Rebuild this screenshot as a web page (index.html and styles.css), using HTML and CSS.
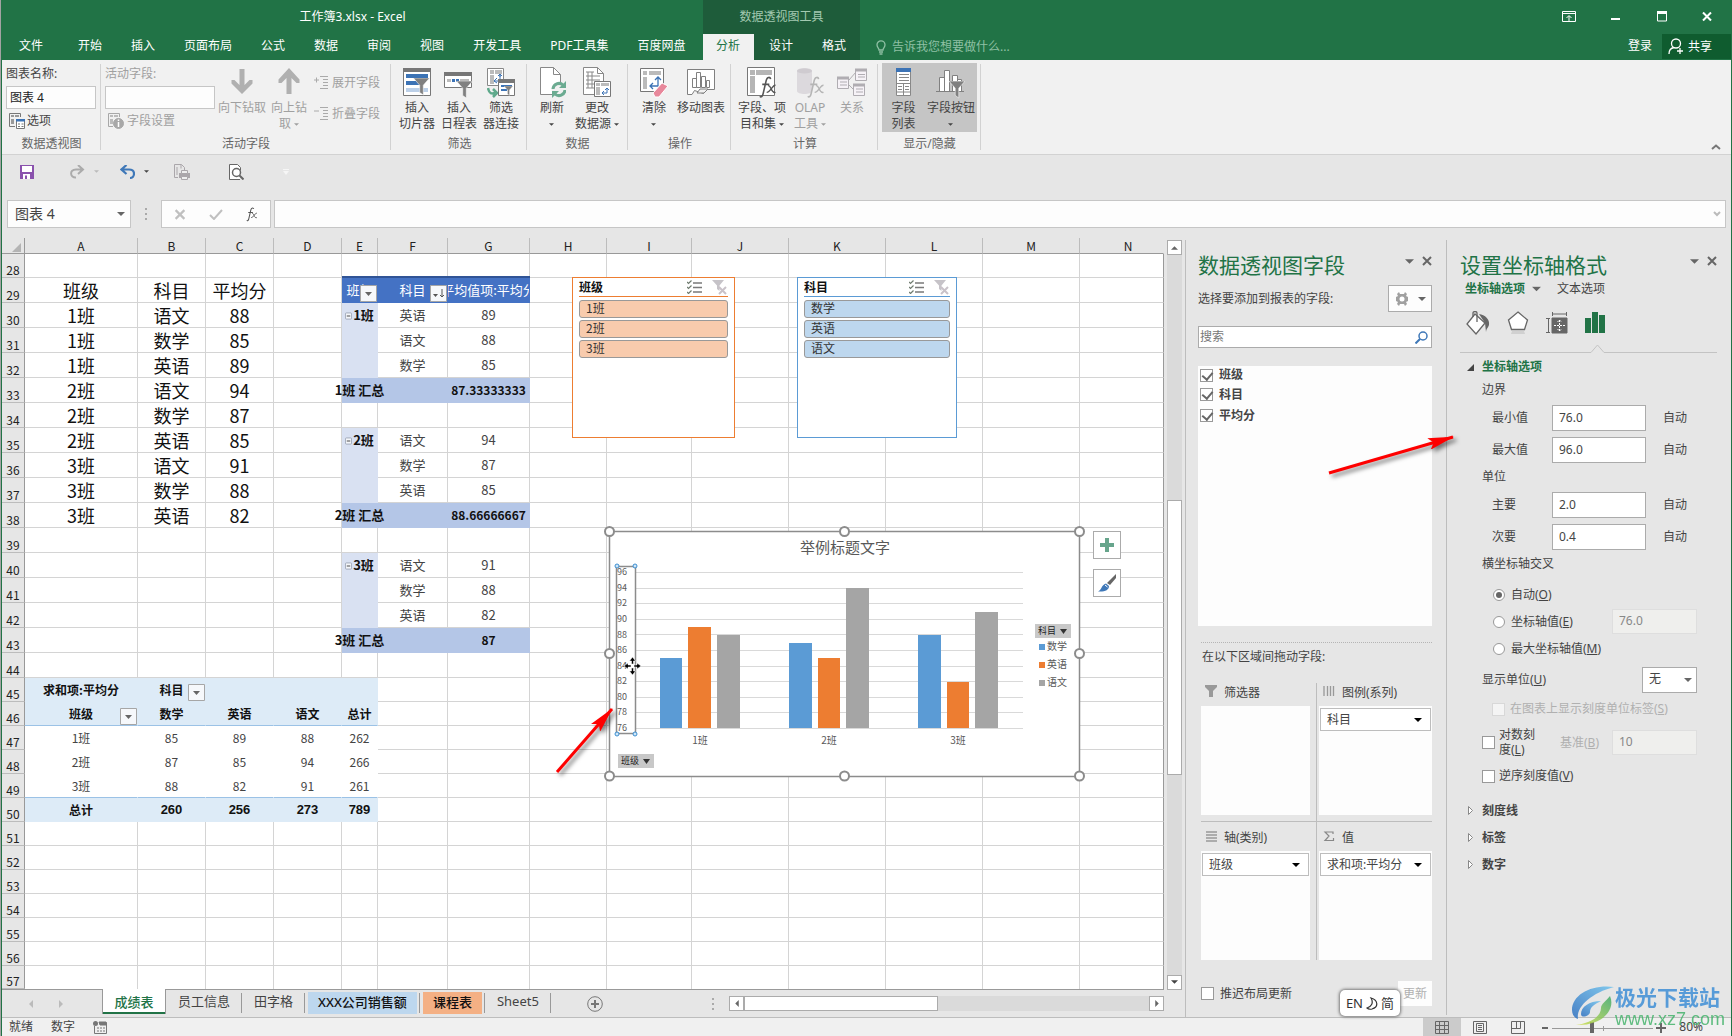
FILE: index.html
```html
<!DOCTYPE html>
<html lang="zh-CN">
<head>
<meta charset="utf-8">
<title>工作簿3.xlsx - Excel</title>
<link rel="stylesheet" href="styles.css">
</head>
<body>
<svg class="defs" aria-hidden="true">
  <defs>
    <symbol id="caret" viewBox="0 0 8 4"><path d="M0 0h8L4 4z" fill="currentColor"/></symbol>
    <symbol id="cross" viewBox="0 0 10 10"><path d="M1 1l8 8M9 1L1 9" stroke="currentColor" stroke-width="2" fill="none"/></symbol>
    <symbol id="drop" viewBox="0 0 17 17"><path d="M.5.5h16v16H.5z" fill="#f6f8fb" stroke="#a6a6a6"/><path d="M5 7h7l-3.500 4z" fill="#666"/></symbol>
    <symbol id="fx" viewBox="0 0 20 26"><path d="M13 3.500C12.500 1 9 .5 8 5L4.500 20C3.800 23.500 2 24.500.8 23M3.500 9.500h8" fill="none" stroke="currentColor" stroke-width="1.800"/><path d="M10 11c4-1 3 9 8.500 7.500M18.500 10.500C15 10 13 18.500 8.500 18.500" fill="none" stroke="currentColor" stroke-width="1.500"/></symbol>
    <symbol id="funnel" viewBox="0 0 18 20"><path d="M0 0h18L11 8v11l-4-3V8z" fill="#808080" stroke="#fff" stroke-width=".6"/></symbol>
    <symbol id="multi" viewBox="0 0 15 14"><path d="M0 2l1.500 1.500L4.500.5M0 7l1.500 1.500 3-3M0 12l1.500 1.500 3-3" fill="none" stroke="#6f7b6f" stroke-width="1.200"/><path d="M6 3h9M6 7.500h9M6 12h9" stroke="#7a7a7a" stroke-width="1.300"/></symbol>
    <symbol id="clear" viewBox="0 0 15 15"><path d="M0 0h12L7.500 5.500V11L5 9V5.500z" fill="#c6c3c8"/><path d="M7 7l7 7M14 7l-7 7" stroke="#c9c2c9" stroke-width="2"/></symbol>
    <symbol id="minus" viewBox="0 0 8 8"><rect x=".5" y=".5" width="7" height="7" rx="1" fill="#f4f6fa" stroke="#9aa3b5"/><path d="M2 4h4" stroke="#333"/></symbol>
    <marker id="tip" viewBox="0 0 26 12" refX="25" refY="6" markerWidth="26" markerHeight="12" markerUnits="userSpaceOnUse" orient="auto"><path d="M26 6L0 0l5 6-5 6z" fill="#fe0000"/></marker>
  </defs>
</svg>
<div class="app">

<header class="top">
  <div class="main-tabs">
    <h1 class="doc-title">工作簿3.xlsx - Excel</h1>
    <nav class="tabs">
      <button class="tab file">文件</button><button class="tab">开始</button><button class="tab">插入</button><button class="tab">页面布局</button><button class="tab">公式</button><button class="tab">数据</button><button class="tab">审阅</button><button class="tab">视图</button><button class="tab">开发工具</button><button class="tab">PDF工具集</button><button class="tab">百度网盘</button>
    </nav>
  </div>
  <div class="context-tabs">
    <div class="context-title">数据透视图工具</div>
    <nav class="tabs"><button class="tab active">分析</button><button class="tab">设计</button><button class="tab">格式</button></nav>
  </div>
  <label class="tell">
    <svg width="10" height="15" viewBox="0 0 10 15" fill="none" stroke="#8fc0a4" stroke-width="1.300"><path d="M3 10C3 8 1 7.500 1 4.800a4 4 0 0 1 8 0C9 7.500 7 8 7 10zM3 12h4M3.500 14h3"/></svg>
    <input type="text" placeholder="告诉我您想要做什么..." aria-label="告诉我您想要做什么">
  </label>
  <div class="top-right">
    <div class="window-buttons">
      <button aria-label="功能区显示选项"><svg width="14" height="11" viewBox="0 0 14 11" fill="none" stroke="#fff"><path d="M.5.5h13v10H.5zM.5 2.500h13M7 10V5M4.500 7L7 4.500 9.500 7"/></svg></button>
      <button aria-label="最小化"><svg width="10" height="11" viewBox="0 0 10 11"><path d="M0 7h9v2H0z" fill="#fff"/></svg></button>
      <button aria-label="最大化"><svg width="10" height="11" viewBox="0 0 10 11"><path d="M.5.5h9v9.500h-9z" fill="none" stroke="#fff"/><path d="M0 0h10v3H0z" fill="#fff"/></svg></button>
      <button aria-label="关闭"><svg width="10" height="11" viewBox="0 0 10 10" color="#fff"><use href="#cross"/></svg></button>
    </div>
    <div class="account">
      <a href="#" class="login">登录</a>
      <button class="share"><svg width="16" height="17" viewBox="0 0 16 17" fill="none" stroke="#fff" stroke-width="1.300"><circle cx="8" cy="5.500" r="4.500"/><path d="M1 16c0-4 2-6 5-6.500M9 13h6M12 10v6"/></svg>共享</button>
    </div>
  </div>
</header>

<section class="ribbon">
  <div class="group g-name">
    <div class="group-body column">
      <label class="field-label" for="chart-name">图表名称:</label>
      <input id="chart-name" class="ribbon-input" type="text" value="图表 4">
      <button class="small-btn"><svg width="16" height="16" viewBox="0 0 16 16" fill="none" stroke="#777"><path d="M6 13.500H.5V.5h11V4"/><path d="M2 2h3v2H2zM6 2h4v2H6zM2 6h3v5H2z" fill="#999" stroke="none"/><path d="M7.500 6.500h8v9h-8z" fill="#fff"/><path d="M7 6h9v2.500H7z" fill="#3c73b5" stroke="none"/><path d="M9 11h2M12.500 11h2M9 13.500h2M12.500 13.500h2"/></svg>选项</button>
    </div>
    <div class="group-label">数据透视图</div>
  </div>
  <div class="group g-field">
    <div class="group-body">
      <div class="column">
        <label class="field-label dim" for="active-field">活动字段:</label>
        <input id="active-field" class="ribbon-input" type="text">
        <button class="small-btn dim"><svg width="16" height="16" viewBox="0 0 16 16" fill="none" stroke="#a8a8a8"><path d="M5 13.500H.5V.5h11V4"/><path d="M2 2h3v2H2zM6 2h4v2H6zM2 6h3v5H2z" fill="#bbb" stroke="none"/><circle cx="10.500" cy="10.500" r="5" fill="#a8a8a8"/><path d="M10.500 9v5M10.500 6.500v1.500" stroke="#fff" stroke-width="1.500"/></svg>字段设置</button>
      </div>
      <button class="big dim w48"><svg width="22" height="32" viewBox="0 0 22 32"><path d="M8.500 2h5v16l5-5h3v3.500L11 27 .5 16.500V13h3l5 5z" fill="#b0b0b0"/></svg>向下钻取</button>
      <button class="big dim w46"><svg width="22" height="32" viewBox="0 0 22 32"><path d="M8.500 27h5V11l5 5h3v-3.500L11 1 .5 12.500V16h3l5-5z" fill="#b0b0b0"/></svg><span>向上钻<br>取 <svg class="c5"><use href="#caret"/></svg></span></button>
      <div class="expand-col">
        <button class="small-btn dim"><svg width="15" height="14" viewBox="0 0 15 14" stroke="#aaa" fill="none"><path d="M0 4h5M2.500 1.500v5M6 .5h8M9 3.500h5M9 6.500h5M9 9.500h5M6 12.500h8"/></svg>展开字段</button>
        <button class="small-btn dim"><svg width="15" height="14" viewBox="0 0 15 14" stroke="#aaa" fill="none"><path d="M0 4h5M6 .5h8M9 3.500h5M9 6.500h5M9 9.500h5M6 12.500h8"/></svg>折叠字段</button>
      </div>
    </div>
    <div class="group-label">活动字段</div>
  </div>
  <div class="group g-filter">
    <div class="group-body">
      <button class="big w42"><svg width="28" height="32" viewBox="0 0 28 32"><path d="M.5 1.500h27v27H.5z" fill="#fff" stroke="#777"/><path d="M0 1h28v4H0z" fill="#777"/><path d="M3 7h22v4H3zM3 14h14v4H3z" fill="#3c73b5"/><path d="M3 21h22v4H3z" fill="#bcd0e8"/><use href="#funnel" x="10" y="11" width="17" height="18"/></svg><span>插入<br>切片器</span></button>
      <button class="big w42"><svg width="30" height="32" viewBox="0 0 30 32"><path d="M.5 5.500h27v15H.5z" fill="#fff" stroke="#777"/><path d="M0 5h28v4H0z" fill="#777"/><path d="M3 12h4v3H3z" fill="#bbb"/><path d="M8 12h3v3H8zM12 12h3v3h-3z" fill="#3c73b5"/><path d="M16 12h9v3h-9z" fill="#bbb"/><use href="#funnel" x="12" y="14" width="17" height="18"/></svg><span>插入<br>日程表</span></button>
      <button class="big w42"><svg width="28" height="32" viewBox="0 0 28 32" fill="none" stroke="#888"><path d="M.5 1.500h16v17H.5z" fill="#fff"/><path d="M3 3h4v4H3zM8 3h7v4H8zM3 8h4v9H3z" fill="#bbb" stroke="none"/><path d="M8 14l-1 0 3-3m-3 3l3 2M13 10V7l-2 2m2-2l2 2M8 14h5v-6" stroke="#3c73b5"/><path d="M1 21c1 6 4 6 7 5M6 22l4 4-4 4" stroke="#5fa98b" stroke-width="2.500"/><path d="M11.500 12.500h16v16h-16z" fill="#fff" stroke="#777"/><path d="M11 12h17v4H11z" fill="#777" stroke="none"/><path d="M14 18h11v2H14zM14 22h6v2h-6z" fill="#3c73b5" stroke="none"/><use href="#funnel" x="17" y="19" width="9" height="10"/></svg><span>筛选<br>器连接</span></button>
    </div>
    <div class="group-label">筛选</div>
  </div>
  <div class="group g-data">
    <div class="group-body">
      <button class="big w42"><svg width="28" height="32" viewBox="0 0 28 32" fill="none"><path d="M2.500.5h13l7 7v20h-20z" fill="#fff" stroke="#888"/><path d="M15.500.5v7h7" stroke="#888"/><circle cx="21" cy="22.500" r="7.500" fill="#f1f1f1"/><path d="M15 22a6 6 0 0 1 10-4M27 23a6 6 0 0 1-10 4" stroke="#6bab91" stroke-width="3"/><path d="M21 21h7v-7zM21 24h-7v7z" fill="#6bab91"/></svg><span>刷新<br><svg class="c5"><use href="#caret"/></svg></span></button>
      <button class="big w48"><svg width="28" height="32" viewBox="0 0 28 32" fill="none" stroke="#888"><path d="M.5.500h14l6 6v21H.5z" fill="#fff"/><path d="M14.500.5v6h6M3 5h8M3 9h14M3 13h14M3 17h8M3 21h8M5 5v16M9 5v16"/><path d="M11.500 14.500h16v15h-16z" fill="#fff" stroke="#777"/><path d="M13 16h4v3h-4zM18 16h8v3h-8zM13 20h4v8h-4z" fill="#bbb" stroke="none"/><path d="M19 26h5v-4M21 24l-2 2 2 2M22 23l2-2 2 2" stroke="#3c73b5"/></svg><span>更改<br>数据源 <svg class="c5"><use href="#caret"/></svg></span></button>
    </div>
    <div class="group-label">数据</div>
  </div>
  <div class="group g-action">
    <div class="group-body">
      <button class="big w42"><svg width="28" height="32" viewBox="0 0 28 32" fill="none"><path d="M.5 1.500h23v23H.5z" fill="#fff" stroke="#777"/><path d="M3 4h4v4H3zM9 4h12v4H9zM3 10h4v12H3z" fill="#bbb"/><path d="M10 19h8v-8M13 16l-3 3 3 3M15 13l3-3 3 3" stroke="#3c73b5" stroke-width="1.300"/><path d="M13 26l9-10 6 3-9 11h-4z" fill="#e8889b" stroke="#fff"/></svg><span>清除<br><svg class="c5"><use href="#caret"/></svg></span></button>
      <button class="big w52"><svg width="28" height="32" viewBox="0 0 28 32" fill="#fff" stroke="#808080"><path d="M5 27.500H.5v-25h27v20l-9 0-2 4-9-3z"/><path d="M10 26l3-4h8l-4 4z" fill="#f1f1f1"/><path d="M5.500 11.500h4v9h-4zM9.500 5.500h4v15h-4zM14.500 9.500h4v11h-4zM19.500 13.500h3v7h-3z"/></svg>移动图表</button>
    </div>
    <div class="group-label">操作</div>
  </div>
  <div class="group g-calc">
    <div class="group-body">
      <button class="big w54"><svg width="30" height="32" viewBox="0 0 30 32"><path d="M.5.5h27v28H.5z" fill="#fff" stroke="#777"/><path d="M3 3h5v5H3zM9 3h16v5H9zM3 9h5v17H3z" fill="#b5b5b5"/><svg x="12" y="9" width="18" height="23" color="#555"><use href="#fx"/></svg></svg><span>字段、项<br>目和集 <svg class="c5"><use href="#caret"/></svg></span></button>
      <button class="big dim w42"><svg width="29" height="32" viewBox="0 0 29 32"><path d="M1 4c0-4 15-4 15 0v20c0 4-15 4-15 0z" fill="#dcd9dd"/><ellipse cx="8.500" cy="4" rx="7.500" ry="2.500" fill="#cfcbd0"/><svg x="11" y="9" width="18" height="23" color="#b5b5b5"><use href="#fx"/></svg></svg><span>OLAP<br>工具 <svg class="c5"><use href="#caret"/></svg></span></button>
      <button class="big dim w42"><svg width="31" height="32" viewBox="0 0 31 32" fill="#f6f2f7" stroke="#b0adb2"><path d="M12 13l7-8M12 18l5 5" fill="none"/><path d="M.5 10.500h11v11H.5zM18.500 2.500h11v11h-11zM16.500 17.500h11v11h-11z"/><path d="M0 11h12M18 3h12M16 18h12" stroke-width="3"/><path d="M3 15h7M3 18h7M21 7.500h7M21 10h7M19 22h7M19 25h7"/></svg>关系</button>
    </div>
    <div class="group-label">计算</div>
  </div>
  <div class="group g-show">
    <div class="group-body">
      <button class="big pressed w43"><svg width="16" height="32" viewBox="0 0 16 32"><path d="M.5 1.500h14v27H.5z" fill="#fff" stroke="#888"/><path d="M0 1h15v4H0z" fill="#3c73b5"/><path d="M3 7.500h10M3 10.500h10M3 13.500h10M0 16.500h15M7.500 17v12M2 19.500h4M9 19.500h4M2 22.500h4M9 22.500h4M0 25h15" stroke="#888"/></svg><span>字段<br>列表</span></button>
      <button class="big pressed w52"><svg width="30" height="32" viewBox="0 0 30 32" fill="#fff" stroke="#808080"><path d="M3.500 10.500h5v14h-5zM8.500 3.500h5v21h-5zM16.500 8.500h5v16h-5zM21.500 12.500h4v12h-4z"/><path d="M0 24.500h28"/><use href="#funnel" x="13" y="14" width="16" height="18"/></svg><span>字段按钮<br><svg class="c5"><use href="#caret"/></svg></span></button>
    </div>
    <div class="group-label">显示/隐藏</div>
  </div>
  <button class="collapse" aria-label="折叠功能区"><svg width="10" height="6" viewBox="0 0 10 6"><path d="M1 5l4-3.500L9 5" fill="none" stroke="#777" stroke-width="2"/></svg></button>
</section>

<section class="qat">
  <button aria-label="保存"><svg width="14" height="14" viewBox="0 0 14 14"><path d="M0 0h14v14H0z" fill="#8a52ad"/><path d="M2 1h10v6H2zM3 9h7v5H3z" fill="#fff"/><path d="M5 10.500h2V14H5z" fill="#8a52ad"/></svg></button>
  <span class="qat-pair"><button aria-label="恢复"><svg width="15" height="14" viewBox="0 0 15 14" fill="none" stroke="#ababab" stroke-width="2"><path d="M8 0l5 4.500L8 9M13 4.500H6C-1 4.500 0 13 6 12.500"/></svg></button><svg class="c5 faint"><use href="#caret"/></svg></span>
  <span class="qat-pair"><button aria-label="撤消"><svg width="15" height="14" viewBox="0 0 15 14" fill="none" stroke="#3f78b8" stroke-width="2.200"><path d="M6.500 0L1.500 4.500l5 4.500M1.500 4.500H9c7 0 6 8.500 1 8.500"/></svg></button><svg class="c5"><use href="#caret"/></svg></span>
  <button aria-label="打印"><svg width="16" height="16" viewBox="0 0 16 16" fill="none" stroke="#aaa6aa"><path d="M4 13.500H.5V.5h7l3 3V6M7 .5v4M3 3v8"/><path d="M5 9h11v5H5z" fill="#aaa6aa" stroke="none"/><path d="M7.500 6.500h6v3h-6zM7.500 12.500h6v3h-6z" fill="#eee"/></svg></button>
  <button class="preview" aria-label="打印预览"><svg width="15" height="16" viewBox="0 0 15 16" fill="none" stroke="#666"><path d="M11 15.500H.5V.5h8l3 3v3" fill="#fff"/><circle cx="7.500" cy="8.500" r="4" stroke-width="1.500"/><path d="M10.500 11.500l4 4" stroke-width="2"/></svg></button>
  <button class="more" aria-label="自定义快速访问工具栏"><svg width="6" height="6" viewBox="0 0 6 6"><path d="M0 0h6v1H0zM0 2h6L3 6z" fill="#f6f6f6"/></svg></button>
</section>

<section class="formula-row">
  <div class="name-box"><input type="text" value="图表 4" aria-label="名称框"><svg class="c7"><use href="#caret"/></svg></div>
  <svg class="grip" width="2" height="12" viewBox="0 0 2 12"><path d="M0 0h2v2H0zM0 5h2v2H0zM0 10h2v2H0z" fill="#aaa"/></svg>
  <div class="fx-box">
    <button aria-label="取消"><svg width="12" height="11" viewBox="0 0 10 10" color="#c0c0c0"><use href="#cross"/></svg></button>
    <button aria-label="输入"><svg width="14" height="11" viewBox="0 0 14 11"><path d="M1 6l4 4L13 1" fill="none" stroke="#c0c0c0" stroke-width="2"/></svg></button>
    <button aria-label="插入函数"><svg width="12" height="15" viewBox="0 0 20 26" color="#555"><use href="#fx"/></svg></button>
  </div>
  <div class="formula"><input type="text" aria-label="编辑栏"><svg width="8" height="6" viewBox="0 0 8 6"><path d="M1 1l3 3 3-3" fill="none" stroke="#bbb" stroke-width="2"/></svg></div>
</section>

<main class="workspace">
  <section class="workbook">
    <div class="sheet-area">
      <div class="sheet">
        <table class="cells">
          <colgroup><col class="k-rh"><col class="k-a"><col class="k-b"><col class="k-b"><col class="k-b"><col class="k-e"><col class="k-f"><col class="k-g"><col class="k-h"><col class="k-i"><col class="k-j"><col class="k-j"><col class="k-j"><col class="k-j"><col></colgroup>
          <thead><tr><th class="corner"><svg width="9" height="9" viewBox="0 0 9 9"><path d="M9 0v9H0z" fill="#b4b4b4"/></svg><th>A<th>B<th>C<th>D<th>E<th>F<th>G<th>H<th>I<th>J<th>K<th>L<th>M<th class="n-head">N</tr></thead>
          <tbody>
          <tr class="r24"><th>28<td><td><td><td><td><td><td><td><td><td><td><td><td><td></tr>
          <tr class="list"><th>29<td>班级<td>科目<td>平均分<td><td class="ph">班级<button class="dd" aria-label="筛选班级"><svg width="17" height="17"><use href="#drop"/></svg></button><td class="ph">科目<button class="dd" aria-label="筛选科目"><svg width="17" height="17" viewBox="0 0 17 17"><path d="M.5.5h16v16H.5z" fill="#f6f8fb" stroke="#a6a6a6"/><path d="M3 9h5l-2.500 3z" fill="#555"/><path d="M12 4v8M10 10l2 2 2-2" stroke="#555" fill="none"/></svg></button><td class="ph clip"><span>平均值项:平均分</span><td><td><td><td><td><td><td></tr>
          <tr class="list"><th>30<td>1班<td>语文<td>88<td><td class="pe"><svg width="7" height="8"><use href="#minus"/></svg> 1班<td class="p">英语<td class="p">89<td><td><td><td><td><td><td></tr>
          <tr class="list"><th>31<td>1班<td>数学<td>85<td><td class="pe"><td class="p">语文<td class="p">88<td><td><td><td><td><td><td></tr>
          <tr class="list"><th>32<td>1班<td>英语<td>89<td><td class="pe"><td class="p">数学<td class="p">85<td><td><td><td><td><td><td></tr>
          <tr class="list"><th>33<td>2班<td>语文<td>94<td><td class="ps"><span class="spill">1班 汇总</span><td class="ps"><td class="ps avg">87.33333333<td><td><td><td><td><td><td></tr>
          <tr class="list"><th>34<td>2班<td>数学<td>87<td><td><td><td><td><td><td><td><td><td><td></tr>
          <tr class="list"><th>35<td>2班<td>英语<td>85<td><td class="pe"><svg width="7" height="8"><use href="#minus"/></svg> 2班<td class="p">语文<td class="p">94<td><td><td><td><td><td><td></tr>
          <tr class="list"><th>36<td>3班<td>语文<td>91<td><td class="pe"><td class="p">数学<td class="p">87<td><td><td><td><td><td><td></tr>
          <tr class="list"><th>37<td>3班<td>数学<td>88<td><td class="pe"><td class="p">英语<td class="p">85<td><td><td><td><td><td><td></tr>
          <tr class="list"><th>38<td>3班<td>英语<td>82<td><td class="ps"><span class="spill">2班 汇总</span><td class="ps"><td class="ps avg">88.66666667<td><td><td><td><td><td><td></tr>
          <tr><th>39<td><td><td><td><td><td><td><td><td><td><td><td><td><td></tr>
          <tr><th>40<td><td><td><td><td class="pe"><svg width="7" height="8"><use href="#minus"/></svg> 3班<td class="p">语文<td class="p">91<td><td><td><td><td><td><td></tr>
          <tr><th>41<td><td><td><td><td class="pe"><td class="p">数学<td class="p">88<td><td><td><td><td><td><td></tr>
          <tr><th>42<td><td><td><td><td class="pe"><td class="p">英语<td class="p">82<td><td><td><td><td><td><td></tr>
          <tr><th>43<td><td><td><td><td class="ps"><span class="spill">3班 汇总</span><td class="ps"><td class="ps avg">87<td><td><td><td><td><td><td></tr>
          <tr><th>44<td><td><td><td><td><td><td><td><td><td><td><td><td><td></tr>
          <tr class="r24"><th>45<td class="qh">求和项:平均分<td class="qh">科目<button class="dd" aria-label="筛选科目"><svg width="17" height="17"><use href="#drop"/></svg></button><td class="qh"><td class="qh"><td class="qh"><td><td><td><td><td><td><td><td><td></tr>
          <tr class="r24"><th>46<td class="qh ql">班级<button class="dd" aria-label="筛选班级"><svg width="17" height="17"><use href="#drop"/></svg></button><td class="qh ql">数学<td class="qh ql">英语<td class="qh ql">语文<td class="qh ql">总计<td><td><td><td><td><td><td><td><td></tr>
          <tr class="r24"><th>47<td class="q">1班<td class="q">85<td class="q">89<td class="q">88<td class="q">262<td><td><td><td><td><td><td><td><td></tr>
          <tr class="r24"><th>48<td class="q">2班<td class="q">87<td class="q">85<td class="q">94<td class="q">266<td><td><td><td><td><td><td><td><td></tr>
          <tr class="r24"><th>49<td class="q ql">3班<td class="q ql">88<td class="q ql">82<td class="q ql">91<td class="q ql">261<td><td><td><td><td><td><td><td><td></tr>
          <tr class="r24"><th>50<td class="qh qt">总计<td class="qh qt">260<td class="qh qt">256<td class="qh qt">273<td class="qh qt">789<td><td><td><td><td><td><td><td><td></tr>
          <tr class="r24"><th>51<td><td><td><td><td><td><td><td><td><td><td><td><td><td></tr>
          <tr class="r24"><th>52<td><td><td><td><td><td><td><td><td><td><td><td><td><td></tr>
          <tr class="r24"><th>53<td><td><td><td><td><td><td><td><td><td><td><td><td><td></tr>
          <tr class="r24"><th>54<td><td><td><td><td><td><td><td><td><td><td><td><td><td></tr>
          <tr class="r24"><th>55<td><td><td><td><td><td><td><td><td><td><td><td><td><td></tr>
          <tr class="r24"><th>56<td><td><td><td><td><td><td><td><td><td><td><td><td><td></tr>
          <tr class="last"><th>57<td><td><td><td><td><td><td><td><td><td><td><td><td><td></tr>
          </tbody>
        </table>

        <div class="slicer orange">
          <div class="slicer-head"><span>班级</span><svg width="15" height="14"><use href="#multi"/></svg><svg width="15" height="15"><use href="#clear"/></svg></div>
          <button>1班</button><button>2班</button><button>3班</button>
        </div>
        <div class="slicer blue">
          <div class="slicer-head"><span>科目</span><svg width="15" height="14"><use href="#multi"/></svg><svg width="15" height="15"><use href="#clear"/></svg></div>
          <button>数学</button><button>英语</button><button>语文</button>
        </div>

        <svg class="chart" width="482" height="258" viewBox="603 525 482 258">
          <rect x="609.500" y="531.500" width="470" height="245" fill="#fff" stroke="#8c8c8c" stroke-width="1.500"/>
          <text x="845" y="553" class="t-title">举例标题文字</text>
          <path class="gridline" d="M635 572.500h388M635 588.500h388M635 603.500h388M635 619.500h388M635 634.500h388M635 650.500h388M635 666.500h388M635 681.500h388M635 697.500h388M635 712.500h388M635 728.500h388"/>
          <g fill="#5b9bd5"><rect x="660" y="658" width="22" height="70"/><rect x="789" y="643" width="23" height="85"/><rect x="918" y="635" width="23" height="93"/></g>
          <g fill="#ed7d31"><rect x="688" y="627" width="23" height="101"/><rect x="818" y="658" width="22" height="70"/><rect x="947" y="682" width="22" height="46"/></g>
          <g fill="#a5a5a5"><rect x="717" y="635" width="23" height="93"/><rect x="846" y="588" width="23" height="140"/><rect x="975" y="612" width="23" height="116"/></g>
          <g class="t-axis"><text x="617" y="575">96</text><text x="617" y="591">94</text><text x="617" y="606">92</text><text x="617" y="622">90</text><text x="617" y="638">88</text><text x="617" y="653">86</text><text x="617" y="669">84</text><text x="617" y="684">82</text><text x="617" y="700">80</text><text x="617" y="715">78</text><text x="617" y="731">76</text></g>
          <g class="t-cat"><text x="700" y="744">1班</text><text x="829" y="744">2班</text><text x="958" y="744">3班</text></g>
          <g class="t-leg"><text x="1047" y="650">数学</text><text x="1047" y="668">英语</text><text x="1047" y="686">语文</text></g>
          <path d="M1039 644h6v6h-6z" fill="#5b9bd5"/><path d="M1039 662h6v6h-6z" fill="#ed7d31"/><path d="M1039 680h6v6h-6z" fill="#a5a5a5"/>
          <rect x="1035" y="624" width="36" height="14" fill="#c8c8c8"/><text x="1038" y="634" class="t-btn">科目</text><path d="M1060 629h7l-3.500 5z" fill="#333"/>
          <rect x="618" y="754" width="36" height="14" fill="#c8c8c8"/><text x="621" y="764" class="t-btn">班级</text><path d="M643 759h7l-3.500 5z" fill="#333"/>
          <rect x="616.500" y="566.500" width="19" height="167" fill="none" stroke="#8c8c8c" stroke-width="1.500"/>
          <g fill="#cfe6f8" stroke="#3c8fd0"><circle cx="617" cy="566" r="2"/><circle cx="635" cy="566" r="2"/><circle cx="617" cy="734" r="2"/><circle cx="635" cy="734" r="2"/></g>
          <g fill="#fff" stroke="#8c8c8c" stroke-width="2"><circle cx="609.500" cy="531.500" r="4.500"/><circle cx="844.500" cy="531.500" r="4.500"/><circle cx="1079.500" cy="531.500" r="4.500"/><circle cx="609.500" cy="653.500" r="4.500"/><circle cx="1079.500" cy="653.500" r="4.500"/><circle cx="609.500" cy="776" r="4.500"/><circle cx="844.500" cy="776" r="4.500"/><circle cx="1079.500" cy="776" r="4.500"/></g>
          <path d="M632.500 657l3 4h-2v3h-2v-3h-2zM632.500 675l3-4h-2v-3h-2v3h-2zM624 666l4-3v2h3v2h-3v2zM641 666l-4-3v2h-3v2h3v2z" fill="#000" stroke="#fff" stroke-width=".5"/>
        </svg>
        <div class="chart-tools">
          <button aria-label="图表元素"><svg width="14" height="14" viewBox="0 0 14 14"><path d="M5 0h4v5h5v4H9v5H5V9H0V5h5z" fill="#67a58c"/></svg></button>
          <button aria-label="图表样式"><svg width="18" height="18" viewBox="0 0 18 18"><path d="M18 0v4l-6 7-3-2z" fill="#666"/><path d="M8 9.500l3 2.500c0 4-4 6-11 5.500C4 16 3 11 8 9.500z" fill="#3f78b8"/><path d="M7 11l2.500 2" stroke="#fff"/></svg></button>
        </div>
        <svg class="arrow a1" width="68" height="76" viewBox="0 0 68 76"><path d="M5 68L60 5" stroke="#fe0000" stroke-width="3" marker-end="url(#tip)"/></svg>
      </div>
      <div class="vscroll">
        <button aria-label="向上滚动"><svg width="7" height="4" viewBox="0 0 8 4"><path d="M4 0l4 4H0z" fill="#666"/></svg></button>
        <div class="v-before"></div><div class="v-thumb"></div><div class="v-after"></div>
        <button aria-label="向下滚动"><svg width="7" height="4"><use href="#caret"/></svg></button>
      </div>
    </div>
    <div class="sheet-bar">
      <div class="sheet-nav"><svg width="4" height="8" viewBox="0 0 4 8"><path d="M4 0v8L0 4z" fill="#bbb"/></svg><svg width="4" height="8" viewBox="0 0 4 8"><path d="M0 0v8l4-4z" fill="#bbb"/></svg></div>
      <button class="st current">成绩表</button>
      <button class="st">员工信息</button>
      <button class="st">田字格</button>
      <button class="st colored"><span class="c-blue">XXX公司销售额</span></button>
      <button class="st colored"><span class="c-orange">课程表</span></button>
      <button class="st">Sheet5</button>
      <button class="add" aria-label="新工作表"><svg width="16" height="16" viewBox="0 0 16 16" fill="none" stroke="#777"><circle cx="8" cy="8" r="7.300"/><path d="M4 8h8M8 4v8" stroke-width="2"/></svg></button>
      <svg class="grip bar-grip" width="2" height="12" viewBox="0 0 2 12"><path d="M0 0h2v2H0zM0 5h2v2H0zM0 10h2v2H0z" fill="#aaa"/></svg>
      <div class="hscroll">
        <button aria-label="向左滚动"><svg width="4" height="7" viewBox="0 0 4 8"><path d="M4 0v8L0 4z" fill="#666"/></svg></button>
        <div class="h-thumb"></div><div class="h-after"></div>
        <button aria-label="向右滚动"><svg width="4" height="7" viewBox="0 0 4 8"><path d="M0 0v8l4-4z" fill="#666"/></svg></button>
      </div>
    </div>
  </section>

  <aside class="pane fields">
    <div class="pane-head"><h2>数据透视图字段</h2><button aria-label="选项"><svg width="9" height="5"><use href="#caret"/></svg></button><button aria-label="关闭"><svg width="10" height="10"><use href="#cross"/></svg></button></div>
    <div class="choose"><span>选择要添加到报表的字段:</span><button class="gear" aria-label="工具"><svg width="14" height="14" viewBox="0 0 14 14"><path d="M4 0l1 2h4l1-2 2 2-1 2 2 1v4l-2 1 1 2-2 2-1-2H5l-1 2-2-2 1-2-2-1V5l2-1-1-2z" fill="#a0a0a0"/><circle cx="7" cy="7" r="2.500" fill="#fff"/></svg><svg class="c7"><use href="#caret"/></svg></button></div>
    <div class="search"><input type="text" placeholder="搜索" aria-label="搜索"><svg width="13" height="13" viewBox="0 0 13 13" fill="none" stroke="#3f78b8"><circle cx="8" cy="5" r="4" stroke-width="1.500"/><path d="M5 8l-4.500 4.500" stroke-width="2"/></svg></div>
    <div class="field-list">
      <label><input type="checkbox" checked>班级</label>
      <label><input type="checkbox" checked>科目</label>
      <label><input type="checkbox" checked>平均分</label>
    </div>
    <div class="drag-hint">在以下区域间拖动字段:</div>
    <div class="zones">
      <div class="zone left"><h3><svg width="12" height="12" viewBox="0 0 12 12"><path d="M0 0h12v2L8 6v6H4V6L0 2z" fill="#999"/></svg>筛选器</h3><div class="well"></div></div>
      <div class="zone"><h3><svg width="12" height="12" viewBox="0 0 12 12"><path d="M1 1v10M4.500 1v10M7.500 1v10M10.500 1v10" stroke="#999" stroke-width="1.300"/></svg>图例(系列)</h3><div class="well"><button>科目<svg class="c7"><use href="#caret"/></svg></button></div></div>
      <div class="zone left low"><h3><svg width="12" height="12" viewBox="0 0 12 12"><path d="M1 2h11M1 5h11M1 8h11M1 11h11" stroke="#999" stroke-width="1.300"/></svg>轴(类别)</h3><div class="well"><button>班级<svg class="c7"><use href="#caret"/></svg></button></div></div>
      <div class="zone low"><h3><svg width="12" height="12" viewBox="0 0 12 12"><path d="M10 4V2H2l4 4-4 4.500h8.500V8" fill="none" stroke="#888" stroke-width="1.200"/></svg>值</h3><div class="well"><button>求和项:平均分<svg class="c7"><use href="#caret"/></svg></button></div></div>
    </div>
    <div class="defer"><label><input type="checkbox">推迟布局更新</label><button disabled>更新</button></div>
  </aside>

  <aside class="pane format">
    <div class="pane-head"><h2>设置坐标轴格式</h2><button aria-label="选项"><svg width="9" height="5"><use href="#caret"/></svg></button><button aria-label="关闭"><svg width="10" height="10"><use href="#cross"/></svg></button></div>
    <div class="opt-tabs"><button class="on">坐标轴选项</button><svg width="9" height="6" color="#666" viewBox="0 0 8 5"><use href="#caret" width="8" height="5"/></svg><button>文本选项</button></div>
    <div class="opt-icons">
      <button aria-label="填充"><svg width="24" height="24" viewBox="0 0 24 24"><path d="M9 3l10 9-9 11-9-10z" fill="#fff" stroke="#666" stroke-width="1.300"/><path d="M7 6V2c0-2 4-2 4 0v9" fill="none" stroke="#666" stroke-width="1.300"/><path d="M13 3c6 1 11 5 10 11-1 3-3 4-3 7l-1-9z" fill="#666"/></svg></button>
      <button aria-label="效果"><svg width="22" height="24" viewBox="0 0 22 24"><path d="M11 1l9.500 8-3 9.500h-13L1.500 9z" fill="#fff" stroke="#666" stroke-width="1.300"/><path d="M5 20h12l1 3H4z" fill="#d0d0d0"/></svg></button>
      <button aria-label="大小与属性"><svg width="22" height="24" viewBox="0 0 22 24" fill="none" stroke="#666"><path d="M6 7h15v15H6z" fill="#666"/><path d="M6.500 1v4M20.500 1v4M6.500 3h14M0 7.500h4M0 21.500h4M2.500 7v15"/><path d="M13.500 9v11M8 14.500h11M11.500 11l2-2 2 2M11.500 18l2 2 2-2" stroke="#fff" stroke-dasharray="2 1"/></svg></button>
      <button aria-label="坐标轴选项"><svg width="21" height="24" viewBox="0 0 21 24" fill="#217346"><path d="M0 7h6v15H0zM7 1h6v21H7zM14 4h6v18h-6z"/></svg></button>
    </div>
    <div class="notch"><span></span><svg width="13" height="9" viewBox="0 0 13 9"><path d="M0 8.500l6.500-7.500L13 8.500" fill="#e6e6e6" stroke="#c3c3c3"/></svg><span></span></div>
    <h3 class="sec open"><svg width="7" height="7" viewBox="0 0 7 7"><path d="M7 0v7H0z" fill="#444"/></svg>坐标轴选项</h3>
    <h4>边界</h4>
    <div class="num"><label for="v-min">最小值</label><input id="v-min" type="text" value="76.0"><span>自动</span></div>
    <div class="num next"><label for="v-max">最大值</label><input id="v-max" type="text" value="96.0"><span>自动</span></div>
    <h4 class="tight">单位</h4>
    <div class="num"><label for="v-major">主要</label><input id="v-major" type="text" value="2.0"><span>自动</span></div>
    <div class="num next"><label for="v-minor">次要</label><input id="v-minor" type="text" value="0.4"><span>自动</span></div>
    <h4 class="tight">横坐标轴交叉</h4>
    <div class="radios">
      <label><input type="radio" name="cross" checked>自动(<u>O</u>)</label>
      <div class="with-value"><label><input type="radio" name="cross">坐标轴值(<u>E</u>)</label><input type="text" class="off" value="76.0" aria-label="坐标轴值" disabled></div>
      <label><input type="radio" name="cross">最大坐标轴值(<u>M</u>)</label>
    </div>
    <div class="unit-row"><label for="unit">显示单位(<u>U</u>)</label><div class="select"><select id="unit"><option>无</option></select><svg class="c7"><use href="#caret"/></svg></div></div>
    <label class="check sub"><input type="checkbox" disabled><span>在图表上显示刻度单位标签(<u>S</u>)</span></label>
    <div class="log-row"><label class="check"><input type="checkbox"><span>对数刻<br>度(<u>L</u>)</span></label><label class="muted" for="base">基准(<u>B</u>)</label><input id="base" type="text" class="off" value="10" disabled></div>
    <label class="check reverse"><input type="checkbox"><span>逆序刻度值(<u>V</u>)</span></label>
    <div class="secs">
      <h3 class="sec"><svg width="5" height="9" viewBox="0 0 5 9"><path d="M.5.5l4 4-4 4z" fill="#fff" stroke="#888"/></svg>刻度线</h3>
      <h3 class="sec"><svg width="5" height="9" viewBox="0 0 5 9"><path d="M.5.5l4 4-4 4z" fill="#fff" stroke="#888"/></svg>标签</h3>
      <h3 class="sec"><svg width="5" height="9" viewBox="0 0 5 9"><path d="M.5.5l4 4-4 4z" fill="#fff" stroke="#888"/></svg>数字</h3>
    </div>
  </aside>
</main>

<footer class="status">
  <span>就绪</span><span>数字</span>
  <svg width="14" height="13" viewBox="0 0 14 13" fill="none" stroke="#777"><path d="M1.500 5v7.500h12v-11H6"/><path d="M6 1h7v3H7z" fill="#777"/><circle cx="2.500" cy="2.500" r="2.500" fill="#777" stroke="none"/><path d="M4 7h2M7 7h2M10 7h2M4 10h2M7 10h2M10 10h2"/></svg>
  <div class="status-right">
    <button class="view sel" aria-label="普通"><svg width="14" height="13" viewBox="0 0 14 13" fill="none" stroke="#666"><path d="M.5.5h13v12H.5zM.5 4.500h13M.5 8.500h13M4.500.5v12M9.500.5v12"/></svg></button>
    <button class="view" aria-label="页面布局"><svg width="14" height="13" viewBox="0 0 14 13" fill="none" stroke="#666"><path d="M.5.5h13v12H.5zM3.500 2.500h7v8h-7zM5 4.500h4M5 6.500h4M5 8.500h4"/></svg></button>
    <button class="view" aria-label="分页预览"><svg width="14" height="13" viewBox="0 0 14 13" fill="none" stroke="#666"><path d="M.5.5h13v12H.5zM.5 7.500h9v-7M5.500.5v7"/></svg></button>
    <svg class="zoom" width="124" height="13" viewBox="0 0 124 13"><path d="M0 6h6v2H0zM114 6h10v2h-10zM118 2h2v10h-2z" fill="#666"/><path d="M10 7.500h101M61.500 5v5" stroke="#999"/><path d="M48 1h4v11h-4z" fill="#666"/></svg>
    <span>80%</span>
  </div>
</footer>

<svg class="arrow a2" width="140" height="56" viewBox="0 0 140 56"><path d="M8 44L132 8" stroke="#fe0000" stroke-width="3" marker-end="url(#tip)"/></svg>
<div class="ime">EN <svg width="12" height="13" viewBox="0 0 12 13"><path d="M5 1c7 2 8 9 1 11-2 .5-4 0-5-1C5 10 8 6 5 1z" fill="none" stroke="#333" stroke-width="1.200"/></svg> 简</div>
<div class="brand">
  <svg width="44" height="44" viewBox="0 0 44 44"><defs><linearGradient id="bl" x1="0" y1="1" x2="1" y2="0"><stop offset="0" stop-color="#2d6fc0"/><stop offset="1" stop-color="#6fc3ee"/></linearGradient><linearGradient id="gr" x1="0" y1="1" x2="1" y2="0"><stop offset="0" stop-color="#d5e04c"/><stop offset="1" stop-color="#3faa6b"/></linearGradient></defs><path d="M43 2C22-1 1 9 1 25c0 5 3 8 6 9C5 22 20 8 43 2z" fill="url(#bl)"/><path d="M10 29c0-7 8-13 20-13-6 3-11 6-11 11 0 4-9 7-9 2z" fill="url(#bl)"/><path d="M39 11c6 14-8 30-34 29 14-2 25-8 25-17 0-4 5-7 9-12z" fill="url(#gr)"/></svg>
  <div><strong>极光下载站</strong><em>www.xz7.com</em></div>
</div>
</div>
</body>
</html>
```
FILE: styles.css
```css
* { box-sizing: border-box; }
html { background: #e6e6e6; }
body {
  margin: 0;
  border-left: 1px solid #a3a3a3;
  font: 12px/16px "Noto Sans", "Noto Sans CJK SC", sans-serif;
  color: #444;
}
button, input, select { font: inherit; color: inherit; margin: 0; padding: 0; border: 0; background: none; border-radius: 0; }
button { white-space: nowrap; }
h1, h2, h3, h4 { margin: 0; font-size: 12px; font-weight: 400; }
svg { flex: none; }
.defs { position: absolute; width: 0; height: 0; }
.c5 { width: 5px; height: 3px; vertical-align: middle; }
.c7 { width: 8px; height: 4px; }
.faint { color: #bbb; }
.dim { color: #a0a0a0; }

.app {
  position: relative;
  display: flex;
  flex-direction: column;
  min-height: 100vh;
  border: solid #217346;
  border-width: 0 1px;
  background: #e6e6e6;
}

/* title bar and tabs */
.top { display: flex; height: 60px; background: #217346; color: #fff; }
.main-tabs { display: flex; flex-direction: column; width: 701px; }
.doc-title { line-height: 34px; text-align: center; }
.tabs { display: flex; }
.tab { height: 26px; padding: 0 14px 2px 15px; }
.tab.file { padding: 0 20px 2px 17px; }
.context-tabs { width: 157px; background: #1e5c3a; }
.context-title { height: 34px; line-height: 34px; text-align: center; color: #a3c9b1; }
.context-tabs .tab.active { background: #f1f1f1; color: #217346; padding: 0 14px 2px 13px; }
.tell { display: flex; align-items: flex-end; gap: 6px; padding: 0 0 5px 16px; }
.tell input { width: 150px; height: 18px; }
.tell input::placeholder { color: #8fc0a4; opacity: 1; }
.top-right { margin-left: auto; width: 180px; display: flex; flex-direction: column; }
.window-buttons { height: 34px; padding: 0 19px 2px 11px; display: flex; justify-content: space-between; align-items: center; }
.window-buttons svg { display: block; }
.account { display: flex; justify-content: flex-end; gap: 10px; }
.login { color: #fff; text-decoration: none; line-height: 23px; }
.share { display: flex; align-items: center; gap: 4px; width: 69px; height: 25px; padding-left: 6px; background: #0f5c2f; }

/* ribbon */
.ribbon { display: flex; height: 95px; background: #f1f1f1; border-bottom: 1px solid #d2d2d2; position: relative; }
.group { position: relative; display: flex; flex-direction: column; padding: 0 4px; }
.group::after { content: ""; position: absolute; right: 0; top: 4px; bottom: 4px; width: 1px; background: #d2d2d2; }
.group-body { display: flex; flex: 1; }
.group-label { text-align: center; color: #666; height: 16px; margin-bottom: 2px; }
.g-name { width: 99px; }
.g-field { width: 290px; }
.g-filter { width: 136px; padding-left: 5px; }
.g-data { width: 101px; }
.g-action { width: 103px; padding-left: 5px; }
.g-calc { width: 147px; padding-right: 3px; }
.g-show { width: 103px; }
.column { display: flex; flex-direction: column; }
.g-field .column { width: 110px; margin-right: 3px; }
.field-label { margin-top: 6px; line-height: 16px; }
.ribbon-input { width: 90px; height: 23px; margin: 4px 0 3px; padding: 0 3px 1px; border: 1px solid #c6c6c6; background: #fdfdfd; color: #222; }
.g-field .ribbon-input { width: 110px; }
.small-btn { display: flex; align-items: center; gap: 3px; height: 18px; padding-left: 3px; }
.g-name .small-btn { gap: 2px; }
.big { display: flex; flex-direction: column; align-items: center; padding-top: 7px; height: 73px; line-height: 16px; }
.big > svg { display: block; margin-bottom: 1px; }
.w42 { width: 42px; } .w43 { width: 43px; } .w46 { width: 46px; } .w48 { width: 48px; } .w52 { width: 52px; } .w54 { width: 54px; }
.pressed { background: #c5c5c5; height: 69px; margin-top: 3px; padding-top: 4px; }
.expand-col { display: flex; flex-direction: column; gap: 13px; padding: 14px 0 0 2px; }
.expand-col .small-btn { padding-left: 0; }
.collapse { margin-left: auto; align-self: flex-end; padding: 0 10px 0 0; }

/* quick access toolbar */
.qat { display: flex; align-items: center; height: 45px; padding: 0 0 12px 18px; }
.qat button svg { display: block; }
.qat-pair { display: flex; align-items: center; gap: 9px; margin-left: 36px; }
.qat-pair + .qat-pair { margin-left: 21px; }
.qat-pair + button { margin-left: 25px; }
.qat .preview { margin-left: 39px; }
.qat .more { margin-left: 39px; }

/* formula bar */
.formula-row { display: flex; align-items: center; height: 28px; margin: 0 5px 10px; }
.name-box, .fx-box, .formula { display: flex; align-items: center; height: 28px; border: 1px solid #c6c6c6; background: #fdfdfd; }
.name-box { width: 124px; padding: 0 5px 0 7px; font-size: 14px; }
.name-box input { width: 100%; }
.name-box svg { color: #666; }
.grip { margin: 0 14px; }
.fx-box { width: 110px; padding: 0 12px; justify-content: space-between; }
.fx-box button svg { display: block; }
.formula { flex: 1; margin-left: 3px; padding-right: 4px; }
.formula input { flex: 1; }

/* worksheet */
.workspace { display: flex; flex: 1; }
.workbook { display: flex; flex-direction: column; flex: 1; min-width: 0; }
.sheet-area { display: flex; flex: 1; }
.sheet { position: relative; flex: 1; overflow: hidden; background: #fff; border-bottom: 1px solid #999; }
.cells { width: 100%; table-layout: fixed; border-collapse: separate; border-spacing: 0; font-family: "Noto Sans CJK SC", sans-serif; }
.k-rh { width: 23px; } .k-a { width: 113px; } .k-b { width: 68px; } .k-e { width: 36px; } .k-f { width: 70px; }
.k-g { width: 82px; } .k-h { width: 77px; } .k-i { width: 85px; } .k-j { width: 97px; }
.cells th { padding: 0; font-weight: 400; background: #e6e6e6; color: #222; line-height: 14px; }
.cells thead th { height: 16px; border-right: 1px solid #bcbcbc; border-bottom: 1px solid #999; }
.cells .corner { text-align: right; border-right-color: #999; }
.cells .n-head { padding-left: 13px; border-right-color: #e6e6e6; }
.corner svg { display: block; margin: 4px 3px 0 auto; }
.cells tbody th { vertical-align: bottom; border-right: 1px solid #999; border-bottom: 1px solid #bcbcbc; }
.cells td { position: relative; height: 25px; padding: 0; text-align: center; line-height: 18px; border: solid #d4d4d4; border-width: 0 1px 1px 0; white-space: nowrap; }
.cells td:last-child { border-right-color: #999; }
.cells .r24 td { height: 24px; }
.cells .last td { height: 23px; border-bottom: 0; }
.list td { font-size: 18px; color: #111; }
.cells .ph, .cells .p, .cells .pe, .cells .ps { font-size: 13px; }
.cells .p { color: #444; }
.cells .ph { background: #4472c4; color: #fff; border-color: #4472c4; box-shadow: 0 -2px #305496; }
.cells .pe { background: #d9e1f2; border-color: #d9e1f2; font-weight: 700; color: #111; }
.cells .ps { background: #b4c6e7; border-color: #b4c6e7; font-weight: 700; color: #111; }
.cells .avg { font-size: 12px; }
.pe svg { margin-right: -2px; }
.spill { display: flex; justify-content: center; position: relative; z-index: 1; }
.clip span { display: flex; justify-content: center; overflow: hidden; }
.dd { position: absolute; right: 0; bottom: 0; height: 17px; }
.dd svg { display: block; }
.cells .qh { background: #ddebf7; border-color: #ddebf7; font-weight: 700; color: #111; }
.cells .q { border-color: #fff; }
.cells .ql { border-bottom-color: #9bc2e6; }
.cells .qt + .qt { font-family: "Liberation Sans", sans-serif; font-size: 13px; }

/* slicers */
.slicer { position: absolute; top: 39px; height: 161px; padding: 2px 6px; background: #fff; border: 1px solid; font-family: "Noto Sans CJK SC", sans-serif; }
.slicer.orange { left: 570px; width: 163px; border-color: #ed7d31; }
.slicer.blue { left: 795px; width: 160px; border-color: #5b9bd5; }
.slicer-head { display: flex; align-items: center; gap: 10px; height: 17px; margin-bottom: 3px; padding: 0 1px 2px 0; border-bottom: 1px solid; border-color: inherit; color: #111; font-weight: 700; }
.slicer-head span { flex: 1; line-height: 14px; }
.slicer button { display: block; width: 100%; height: 18px; line-height: 14px; margin-bottom: 2px; padding: 0 0 2px 6px; border: 1px solid #999; border-radius: 3px; text-align: left; color: #333; }
.orange button { background: #f8cbad; }
.blue button { background: #bdd7ee; }

/* chart */
.chart { position: absolute; left: 601px; top: 287px; font-family: "Noto Sans CJK SC", sans-serif; }
.chart text { fill: #595959; }
.t-title { font-size: 15px; text-anchor: middle; }
.gridline { stroke: #d9d9d9; fill: none; }
.t-axis, .t-btn { font-size: 9px; }
.t-cat { font-size: 10px; text-anchor: middle; }
.t-leg { font-size: 10px; }
.chart .t-btn { fill: #222; }
.chart-tools { position: absolute; left: 1091px; top: 293px; display: flex; flex-direction: column; gap: 10px; }
.chart-tools button { display: flex; align-items: center; justify-content: center; width: 28px; height: 28px; border: 1px solid #ababab; background: #fff; }
.arrow { position: absolute; filter: drop-shadow(3px 3px 2px rgba(0, 0, 0, .5)); fill: none; overflow: visible; }
.a1 { left: 550px; top: 466px; }
.a2 { right: 270px; top: 429px; }

/* scroll bars */
.vscroll { display: flex; flex-direction: column; width: 15px; margin: 2px 3px 0; background: #dadada; }
.vscroll button { display: flex; align-items: center; justify-content: center; height: 15px; border: 1px solid #ababab; background: #fff; }
.v-before { flex: 246; } .v-thumb { flex: 273; border: 1px solid #ababab; background: #fff; } .v-after { flex: 201; }
.sheet-bar { display: flex; height: 27px; font-size: 13px; }
.sheet-nav { display: flex; gap: 26px; align-items: center; width: 100px; padding-left: 27px; }
.st { height: 24px; padding: 0 12px 2px; position: relative; }
.st::after { content: ""; position: absolute; right: 0; top: 3px; height: 20px; width: 1px; background: #999; }
.st.current { width: 64px; margin-top: -1px; height: 25px; padding: 0; background: #fff; color: #217346; border: solid #999; border-width: 0 1px; box-shadow: inset 0 -2px #217346; font-weight: 500; }
.st.current::after { content: none; }
.st.colored { padding: 0 3px; color: #111; font-weight: 500; }
.st.colored span { display: block; height: 22px; line-height: 20px; margin-top: 2px; padding: 0 10px; }
.c-blue { background: #bdd7ee; }
.c-orange { background: #f4b084; }
.add { margin-left: 36px; }
.add svg { display: block; }
.bar-grip { margin: auto 15px auto auto; }
.hscroll { display: flex; width: 435px; height: 15px; margin: 6px 21px 0 0; background: #dadada; }
.hscroll button { display: flex; align-items: center; justify-content: center; width: 15px; border: 1px solid #ababab; background: #fff; }
.h-thumb { flex: 193; border: 1px solid #ababab; background: #fff; } .h-after { flex: 212; }

/* task panes */
.pane { display: flex; flex-direction: column; margin: 2px 0; border-left: 1px solid #bdbdbd; color: #444; }
.pane-head { display: flex; align-items: flex-start; gap: 8px; padding-top: 11px; color: #666; }
.pane-head h2 { flex: 1; font-size: 21px; line-height: 28px; color: #217346; }
.pane-head button { height: 20px; }
.pane-head svg { display: block; }
.fields { width: 261px; padding: 0 14px 0 12px; margin-bottom: 0; }
.choose { display: flex; justify-content: space-between; align-items: center; height: 27px; margin-top: 6px; }
.gear { display: flex; align-items: center; justify-content: center; gap: 9px; width: 44px; height: 27px; border: 1px solid #ababab; background: #fdfdfd; color: #666; }
.search { display: flex; align-items: center; height: 22px; margin-top: 14px; padding: 0 3px 0 1px; border: 1px solid #ababab; background: #fff; }
.search input { flex: 1; }
.search input::placeholder { color: #777; opacity: 1; }
.field-list { flex: 1; min-height: 80px; margin-top: 18px; padding-left: 2px; background: #fdfdfd; font-weight: 700; }
.field-list label { display: flex; align-items: center; gap: 6px; height: 21px; }
.field-list label:first-child { height: 18px; }
input[type="checkbox"], input[type="radio"] { appearance: none; flex: none; width: 13px; height: 13px; border: 1px solid #999; background: #fff; }
input[type="checkbox"]:checked::before { content: ""; display: block; width: 5px; height: 8px; margin-left: 3px; border: solid #666; border-width: 0 2px 2px 0; transform: rotate(40deg); }
input[type="radio"] { border-radius: 50%; width: 12px; height: 12px; }
input[type="radio"]:checked::before { content: ""; display: block; width: 6px; height: 6px; margin: 2px; border-radius: 50%; background: #666; }
input[type="checkbox"]:disabled { border-color: #d8d8d8; background: #f4f4f4; }
.drag-hint { margin: 16px 0 0 3px; padding: 5px 0 0 1px; line-height: 18px; border-top: 1px dotted #b5b5b5; }
.zones { display: grid; grid-template-columns: 116px 1fr; margin: 17px 0 0 3px; }
.zone { padding: 0 0 6px 2px; border-bottom: 1px solid #bdbdbd; }
.zone.left { padding: 0 6px 6px 0; border-right: 1px solid #bdbdbd; }
.zone.low { padding-top: 6px; padding-bottom: 0; border-bottom: 0; }
.zone h3 { display: flex; gap: 7px; height: 23px; padding-left: 4px; line-height: 20px; }
.zone h3 svg { margin-top: 2px; }
.well { height: 109px; padding: 2px 1px; background: #fdfdfd; }
.well button { display: flex; align-items: center; justify-content: space-between; width: 100%; height: 23px; padding: 0 8px 0 6px; border: 1px solid #bdbdbd; background: #fff; }
.well svg { color: #000; }
.defer { display: flex; align-items: center; justify-content: space-between; height: 25px; margin: 21px 0 11px 3px; }
.defer label { display: flex; align-items: center; gap: 6px; }
.defer button { width: 34px; height: 25px; background: #fdfdfd; color: #b0b0b0; }

.format { width: 285px; padding: 0 14px 0 13px; }
.opt-tabs { display: flex; align-items: center; height: 20px; padding-left: 5px; }
.opt-tabs .on { color: #217346; font-weight: 700; }
.opt-tabs svg { margin: 0 16px 0 7px; }
.opt-icons { display: flex; gap: 17px; padding: 12px 0 0 6px; }
.opt-icons svg { display: block; }
.notch { display: flex; height: 9px; margin-top: 9px; }
.notch span { flex: none; width: 131px; border-bottom: 1px solid #c3c3c3; }
.notch span:last-child { flex: 1; }
.sec { display: flex; align-items: center; height: 27px; font-weight: 700; }
.sec svg { width: 7px; margin: 0 8px 0 7px; }
.sec.open { height: 20px; margin-top: 4px; color: #217346; }
.format h4 { margin: 3px 0 0 22px; line-height: 20px; }
.format h4.tight { margin-top: 4px; }
.num { display: grid; grid-template-columns: 60px 94px 1fr; align-items: center; margin: 5px 0 0 32px; }
.num.next { margin-top: 6px; }
.num input, .select select { height: 26px; padding: 0 0 2px 6px; border: 1px solid #ababab; background: #fff; }
.num span { padding-left: 17px; }
.radios { margin: 7px 0 0 33px; }
.radios label { display: flex; align-items: center; height: 27px; }
.radios input[type="radio"] { margin-right: 6px; }
.with-value, .unit-row, .log-row { display: flex; justify-content: space-between; align-items: center; margin-right: 20px; }
.off { width: 85px; height: 25px; padding: 0 0 2px 6px; border: 1px solid #dedede; background: #efefed; color: #888; }
.unit-row { margin-left: 22px; margin-top: 5px; }
.select { position: relative; }
.select select { display: block; width: 55px; appearance: none; }
.select svg { position: absolute; right: 5px; top: 11px; color: #666; }
.check { display: flex; align-items: center; gap: 5px; min-height: 18px; margin-left: 22px; }
.check.sub { margin: 7px 0 0 32px; color: #b0b0b0; }
.log-row { margin-top: 9px; height: 30px; line-height: 15px; }
.log-row .check { gap: 4px; }
.muted { color: #b0b0b0; margin-left: 12px; }
.check.reverse { margin-top: 10px; gap: 4px; }
.secs { margin-top: 12px; }

/* status bar */
.status { display: flex; align-items: center; gap: 18px; height: 19px; padding-left: 7px; background: #f0f0f0; border-top: 1px solid #bdbdbd; }
.status-right { display: flex; align-items: center; margin-left: auto; padding-right: 28px; height: 18px; }
.view { width: 38px; height: 18px; display: flex; align-items: center; justify-content: center; }
.view.sel { background: #cbcbcb; }
.zoom { margin: 0 13px 0 5px; }

.ime { position: absolute; right: 331px; bottom: 20px; display: flex; align-items: center; gap: 3px; height: 26px; padding: 0 6px; border-radius: 5px; background: #fff; color: #333; box-shadow: 0 0 3px 1px #777; font-size: 13px; }
.brand { position: absolute; right: 6px; bottom: 7px; display: flex; opacity: .85; }
.brand strong, .brand em { display: block; font-style: normal; }
.brand strong { font-size: 21px; line-height: 24px; color: #3f8fd6; font-weight: 700; }
.brand em { font: 18px/20px "Liberation Sans", sans-serif; color: #45b36c; }
```
